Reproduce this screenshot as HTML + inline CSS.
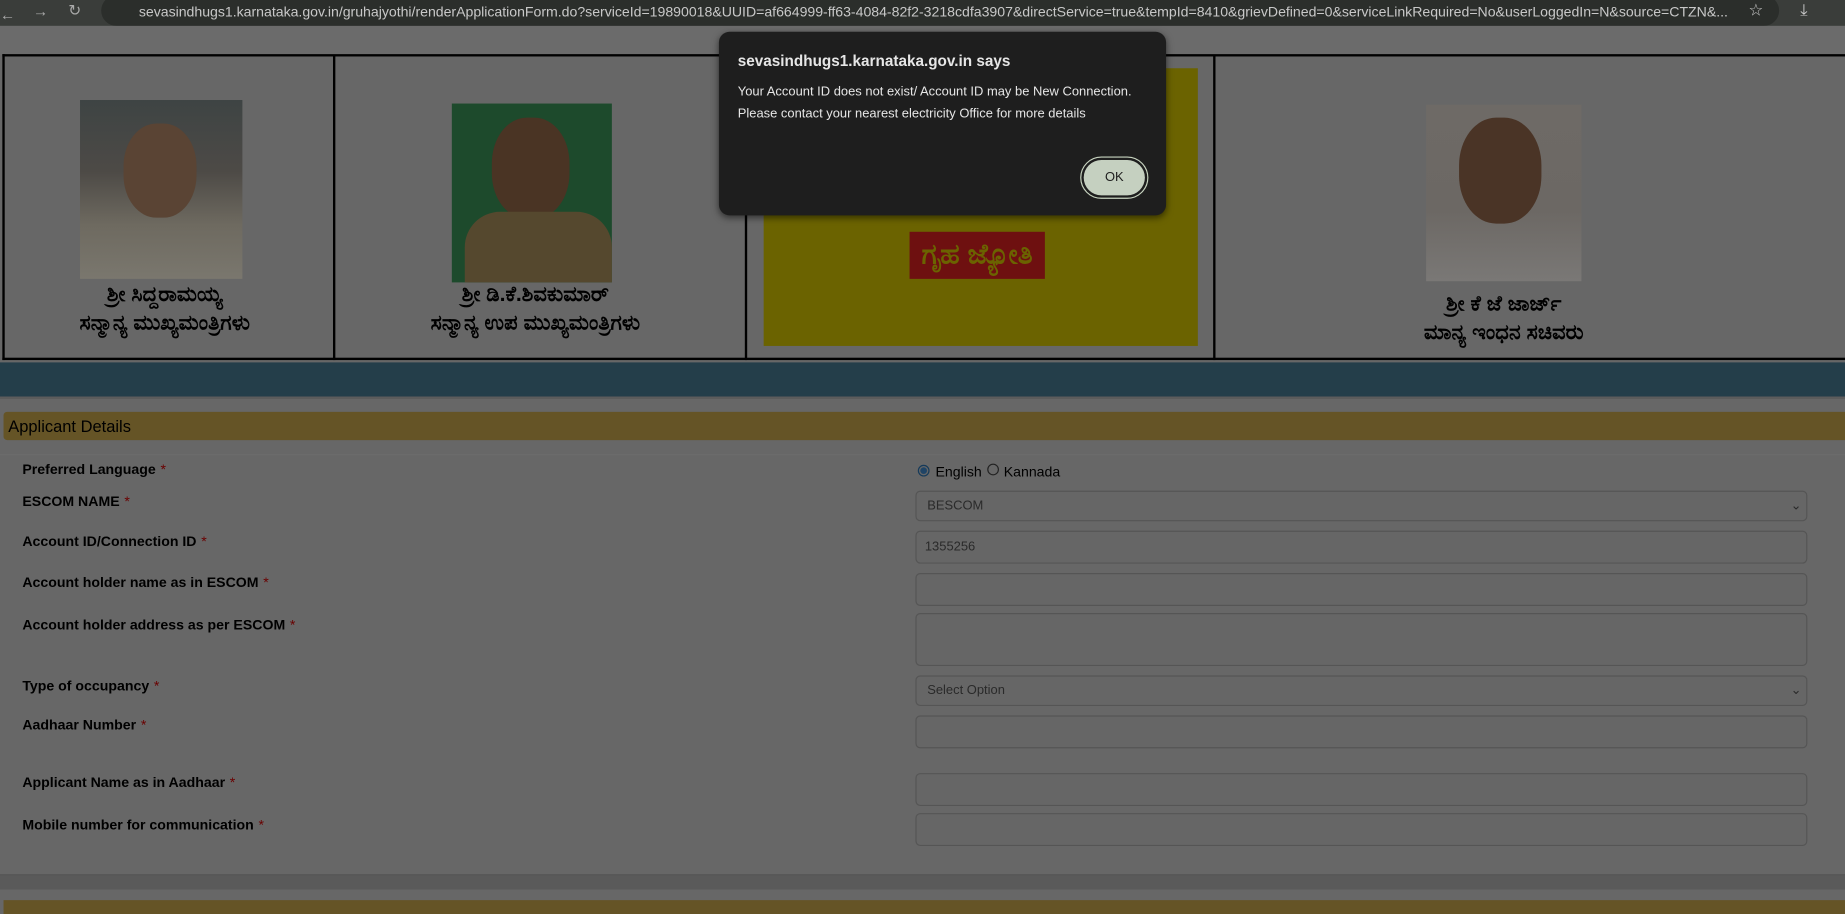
<!DOCTYPE html>
<html><head><meta charset="utf-8"><style>
html,body{margin:0;padding:0;width:1845px;height:911px;overflow:hidden;background:#676767}
#w{position:absolute;left:0;top:0;width:1568px;height:774px;transform:scale(1.17666);transform-origin:0 0;font-family:"Liberation Sans",sans-serif;background:#676767}
.a{position:absolute}
.lbl{position:absolute;left:19px;font-size:12px;font-weight:bold;color:#000}
.lbl i{color:#6a0000;font-style:normal;font-weight:normal;margin-left:4px}
.in{position:absolute;left:778px;width:758px;border:1px solid #555;border-radius:4px;background:#666;font-size:11px;color:#2a2a2a;box-sizing:border-box;padding-left:9px}
.kn{position:absolute;font-family:"Liberation Sans",sans-serif;font-size:18px;font-weight:bold;color:#000;text-align:center;line-height:24px;white-space:nowrap}
</style></head><body><div id="w">
<div class="a" style="left:0;top:0;width:1568px;height:22px;background:#3a3d3a"></div>
<div class="a" style="left:0;top:5px;color:#aaa;font-size:13px">←</div>
<div class="a" style="left:28px;top:2px;color:#aaa;font-size:13px">→</div>
<div class="a" style="left:58px;top:1px;color:#aaa;font-size:13px">↻</div>
<div class="a" style="left:86px;top:-4px;width:1426px;height:26px;border-radius:13px;background:#2b2e2b"></div>
<div class="a" style="left:118px;top:3px;color:#c8c8c8;font-size:12px;white-space:nowrap;letter-spacing:-0.02px">sevasindhugs1.karnataka.gov.in/gruhajyothi/renderApplicationForm.do?serviceId=19890018&amp;UUID=af664999-ff63-4084-82f2-3218cdfa3907&amp;directService=true&amp;tempId=8410&amp;grievDefined=0&amp;serviceLinkRequired=No&amp;userLoggedIn=N&amp;source=CTZN&amp;...</div>
<div class="a" style="left:1486px;top:0px;color:#ccc;font-size:14px">☆</div>
<div class="a" style="left:1530px;top:0px;color:#ccc;font-size:14px">⤓</div>
<div class="a" style="left:0;top:22px;width:1568px;height:25px;background:#6b6b6b"></div>
<div class="a" style="left:2px;top:46px;width:1566px;height:260px;border-top:2px solid #000;border-bottom:2px solid #000;border-left:2px solid #000;box-sizing:border-box"></div>
<div class="a" style="left:283px;top:47px;width:2px;height:259px;background:#000"></div>
<div class="a" style="left:633px;top:47px;width:2px;height:259px;background:#000"></div>
<div class="a" style="left:1031px;top:47px;width:2px;height:259px;background:#000"></div>
<div class="a" style="left:68px;top:85px;width:138px;height:152px;background:linear-gradient(180deg,#3e4444 0,#4d4a46 40%,#6e6a60 70%,#7a776e 100%)"></div>
<div class="a" style="left:105px;top:105px;width:62px;height:80px;border-radius:45%;background:#5a4434"></div>
<div class="a" style="left:384px;top:88px;width:136px;height:152px;background:#1d4a2c"></div>
<div class="a" style="left:418px;top:100px;width:66px;height:86px;border-radius:45%;background:#4a3424"></div>
<div class="a" style="left:395px;top:180px;width:125px;height:60px;border-radius:30px 30px 0 0;background:#55482e"></div>
<div class="a" style="left:649px;top:58px;width:369px;height:236px;background:#6b6300"></div>
<div class="a" style="left:773px;top:197px;width:115px;height:40px;background:#6e1010;color:#6b6300;font-size:24px;font-weight:bold;text-align:center;line-height:40px;font-family:'Liberation Sans','Noto Sans CJK SC',sans-serif">ಗೃಹ ಜ್ಯೋತಿ</div>
<div class="a" style="left:1212px;top:89px;width:132px;height:150px;background:linear-gradient(180deg,#6e6a66 0,#6c6864 60%,#7a7876 100%)"></div>
<div class="a" style="left:1240px;top:100px;width:70px;height:90px;border-radius:45%;background:#4a3426"></div>
<div class="kn" style="left:20px;top:238px;width:240px">ಶ್ರೀ ಸಿದ್ದರಾಮಯ್ಯ<br>ಸನ್ಮಾನ್ಯ ಮುಖ್ಯಮಂತ್ರಿಗಳು</div>
<div class="kn" style="left:330px;top:238px;width:250px">ಶ್ರೀ ಡಿ.ಕೆ.ಶಿವಕುಮಾರ್<br>ಸನ್ಮಾನ್ಯ ಉಪ ಮುಖ್ಯಮಂತ್ರಿಗಳು</div>
<div class="kn" style="left:1160px;top:246px;width:236px">ಶ್ರೀ ಕೆ ಜೆ ಜಾರ್ಜ್<br>ಮಾನ್ಯ ಇಂಧನ ಸಚಿವರು</div>
<div class="a" style="left:0;top:308px;width:1568px;height:29px;background:#243e4a"></div>
<div class="a" style="left:0;top:337px;width:1568px;height:2px;background:#5c5c5c"></div>
<div class="a" style="left:3px;top:350px;width:1565px;height:24px;background:#655426;border-radius:3px 0 0 3px;font-size:14px;line-height:24px;color:#000;padding-left:4px;box-sizing:border-box">Applicant Details</div>
<div class="a" style="left:0;top:386px;width:1568px;height:1px;background:#6c6c6c"></div>
<div class="lbl" style="top:392px">Preferred Language<i>*</i></div>
<div class="lbl" style="top:419px">ESCOM NAME<i>*</i></div>
<div class="lbl" style="top:453px">Account ID/Connection ID<i>*</i></div>
<div class="lbl" style="top:488px">Account holder name as in ESCOM<i>*</i></div>
<div class="lbl" style="top:524px">Account holder address as per ESCOM<i>*</i></div>
<div class="lbl" style="top:576px">Type of occupancy<i>*</i></div>
<div class="lbl" style="top:609px">Aadhaar Number<i>*</i></div>
<div class="lbl" style="top:658px">Applicant Name as in Aadhaar<i>*</i></div>
<div class="lbl" style="top:694px">Mobile number for communication<i>*</i></div>
<div class="a" style="left:780px;top:395px;width:10px;height:10px;border-radius:50%;border:1px solid #153a5a;background:radial-gradient(#1f4466 45%,#666 55%);box-sizing:border-box"></div>
<div class="a" style="left:795px;top:394px;font-size:12px;color:#000">English</div>
<div class="a" style="left:839px;top:394px;width:10px;height:10px;border-radius:50%;border:1px solid #222;box-sizing:border-box"></div>
<div class="a" style="left:853px;top:394px;font-size:12px;color:#000">Kannada</div>
<div class="in" style="top:417px;height:26px;line-height:25px">BESCOM<span style="position:absolute;right:4px">⌄</span></div>
<div class="in" style="top:451px;height:28px;line-height:27px;padding-left:7px">1355256</div>
<div class="in" style="top:487px;height:28px"></div>
<div class="in" style="top:521px;height:45px"></div>
<div class="in" style="top:574px;height:26px;line-height:25px">Select Option<span style="position:absolute;right:4px">⌄</span></div>
<div class="in" style="top:608px;height:28px"></div>
<div class="in" style="top:657px;height:28px"></div>
<div class="in" style="top:691px;height:28px"></div>
<div class="a" style="left:0;top:743px;width:1568px;height:12px;background:#5a5a5a;border-top:1px solid #555"></div>
<div class="a" style="left:3px;top:765px;width:1565px;height:12px;background:#655426"></div>
<div class="a" style="left:611px;top:27px;width:380px;height:156px;border-radius:9px;background:#1e1e1e;box-shadow:0 2px 6px rgba(0,0,0,.5)"></div>
<div class="a" style="left:627px;top:44px;font-size:13px;font-weight:bold;color:#e6e6e6">sevasindhugs1.karnataka.gov.in says</div>
<div class="a" style="left:627px;top:69px;font-size:11px;line-height:19px;color:#e6e6e6">Your Account ID does not exist/ Account ID may be New Connection.<br>Please contact your nearest electricity Office for more details</div>
<div class="a" style="left:918px;top:133px;width:58px;height:36px;border-radius:18px;border:1px solid #c8d4c0;box-sizing:border-box"></div>
<div class="a" style="left:921px;top:136px;width:52px;height:30px;border-radius:15px;background:#c5d0c0;font-size:11px;color:#1e1e1e;text-align:center;line-height:30px">OK</div>
</div></body></html>
